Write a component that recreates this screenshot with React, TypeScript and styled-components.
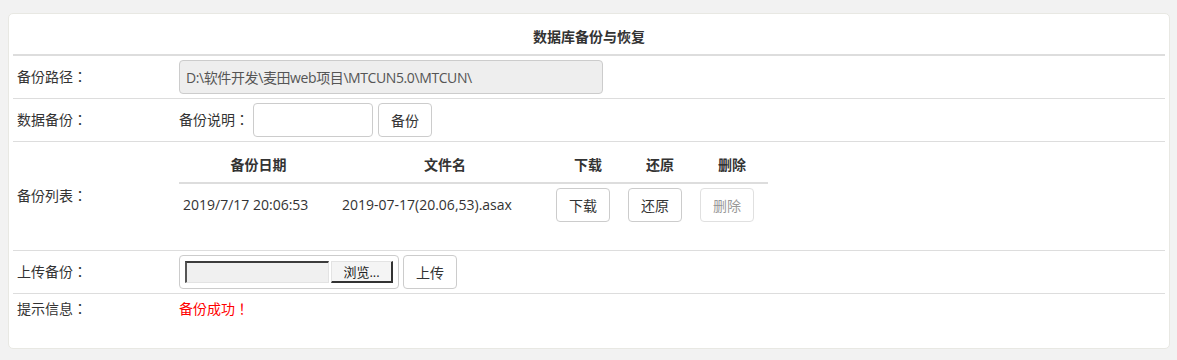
import React from 'react'
import styled, { createGlobalStyle } from 'styled-components'

const GlobalStyle = createGlobalStyle`
  body {
    margin: 0;
    background: #f2f2f2;
    font-family: 'Open Sans', 'Noto Sans CJK SC', sans-serif;
    font-size: 14px;
    color: #333;
  }
`

// TC variant centres full-width punctuation (：！) like the original font does
const labelFont = `'Open Sans', 'Noto Sans CJK TC', sans-serif`

const Card = styled.div`
  margin: 13px 7px 11px 8px;
  padding: 0 4px 24px 4px;
  background: #fff;
  border: 1px solid #e8e8e3;
  border-radius: 5px;
`

const FormTable = styled.table`
  width: 100%;
  border-collapse: collapse;
  font-size: 14px;
`

const Row = styled.tr<{ $last?: boolean }>`
  border-bottom: ${(p) => (p.$last ? 'none' : '1px solid #ddd')};
`

const TitleRow = styled.tr`
  border-bottom: 2px solid #ddd;
`

const TitleCell = styled.th`
  height: 40px;
  padding: 13px 4px 7px;
  box-sizing: border-box;
  line-height: 20px;
  font-weight: 700;
  text-align: center;
  color: #333;
`

const LabelCell = styled.td`
  width: 154px;
  padding: 4px;
  line-height: 22px;
  vertical-align: middle;
  color: #333;
  font-family: ${labelFont};
`

const ValueCell = styled.td`
  padding: 4px;
  line-height: 22px;
  vertical-align: middle;
`

const Inline = styled.div`
  display: flex;
  align-items: center;
  gap: 4px;
`

const Caption = styled.span`
  font-family: ${labelFont};
`

const TextInput = styled.input<{ $width: number; $readonly?: boolean }>`
  box-sizing: border-box;
  width: ${(p) => p.$width}px;
  height: 34px;
  padding: 0 6px;
  border: 1px solid #ccc;
  border-radius: 4px;
  background: ${(p) => (p.$readonly ? '#eee' : '#fff')};
  color: #555;
  font-family: 'Open Sans', 'Noto Sans CJK SC', sans-serif;
  font-size: 14px;
  letter-spacing: ${(p) => (p.$readonly ? '-0.4px' : 'normal')};
  outline: none;
`

const Button = styled.button<{ $gap?: number }>`
  box-sizing: border-box;
  width: 54px;
  height: 34px;
  padding: 0;
  margin-left: ${(p) => p.$gap ?? 0}px;
  border: 1px solid #ccc;
  border-radius: 4px;
  background: #fff;
  color: #333;
  font-family: 'Open Sans', 'Noto Sans CJK SC', sans-serif;
  font-size: 14px;
  cursor: pointer;

  &:disabled {
    color: #999;
    border-color: #e0e0e0;
    cursor: not-allowed;
  }
`

const ListTable = styled.table`
  width: 589px;
  margin-bottom: 20px;
  table-layout: fixed;
  border-collapse: collapse;
  font-size: 14px;
`

// widths are content widths; 4px padding on each side
const ListHead = styled.th<{ $width: number }>`
  width: ${(p) => p.$width}px;
  padding: 9px 4px 7px;
  line-height: 20px;
  font-weight: 700;
  text-align: center;
  color: #333;
  border-bottom: 2px solid #ddd;
`

const ListCell = styled.td`
  padding: 4px;
  line-height: 22px;
  text-align: left;
  vertical-align: middle;
  white-space: nowrap;
  color: #333;
`

const FileBox = styled.div`
  box-sizing: border-box;
  display: flex;
  align-items: center;
  gap: 2px;
  width: 220px;
  height: 34px;
  padding: 0 5px;
  border: 1px solid #ccc;
  border-radius: 4px;
`

const FileField = styled.div`
  box-sizing: border-box;
  width: 144px;
  height: 22px;
  background: #f0f0f0;
  border-top: 2px solid #3c3c3c;
  border-left: 2px solid #555;
  border-right: 1px solid #e3e3e3;
  border-bottom: 1px solid #e3e3e3;
`

const BrowseButton = styled.button`
  box-sizing: border-box;
  width: 62px;
  height: 22px;
  padding: 0;
  background: #f4f4f4;
  border-top: 1px solid #e3e3e3;
  border-left: 1px solid #e3e3e3;
  border-right: 2px solid #333;
  border-bottom: 2px solid #333;
  color: #222;
  font-family: 'Open Sans', 'Noto Sans CJK SC', sans-serif;
  font-size: 13px;
  line-height: 18px;
`

const Hint = styled.span`
  color: #f00;
  font-family: ${labelFont};
`

const backups = [
  { date: '2019/7/17 20:06:53', file: '2019-07-17(20.06,53).asax' },
]

export default function App() {
  return (
    <>
      <GlobalStyle />
      <Card>
        <FormTable>
          <tbody>
            <TitleRow>
              <TitleCell colSpan={2}>数据库备份与恢复</TitleCell>
            </TitleRow>
            <Row>
              <LabelCell>备份路径：</LabelCell>
              <ValueCell>
                <TextInput
                  $width={424}
                  $readonly
                  readOnly
                  value="D:\软件开发\麦田web项目\MTCUN5.0\MTCUN\"
                />
              </ValueCell>
            </Row>
            <Row>
              <LabelCell>数据备份：</LabelCell>
              <ValueCell>
                <Inline>
                  <Caption>备份说明：</Caption>
                  <TextInput $width={120} defaultValue="" />
                  <Button $gap={1}>备份</Button>
                </Inline>
              </ValueCell>
            </Row>
            <Row>
              <LabelCell>备份列表：</LabelCell>
              <ValueCell>
                <ListTable>
                  <thead>
                    <tr>
                      <ListHead $width={151}>备份日期</ListHead>
                      <ListHead $width={206}>文件名</ListHead>
                      <ListHead $width={64}>下载</ListHead>
                      <ListHead $width={64}>还原</ListHead>
                      <ListHead $width={64}>删除</ListHead>
                    </tr>
                  </thead>
                  <tbody>
                    {backups.map((b) => (
                      <tr key={b.file}>
                        <ListCell>{b.date}</ListCell>
                        <ListCell>{b.file}</ListCell>
                        <ListCell>
                          <Button>下载</Button>
                        </ListCell>
                        <ListCell>
                          <Button>还原</Button>
                        </ListCell>
                        <ListCell>
                          <Button disabled>删除</Button>
                        </ListCell>
                      </tr>
                    ))}
                  </tbody>
                </ListTable>
              </ValueCell>
            </Row>
            <Row>
              <LabelCell>上传备份：</LabelCell>
              <ValueCell>
                <Inline>
                  <FileBox>
                    <FileField />
                    <BrowseButton>浏览...</BrowseButton>
                  </FileBox>
                  <Button>上传</Button>
                </Inline>
              </ValueCell>
            </Row>
            <Row $last>
              <LabelCell>提示信息：</LabelCell>
              <ValueCell>
                <Hint>备份成功！</Hint>
              </ValueCell>
            </Row>
          </tbody>
        </FormTable>
      </Card>
    </>
  )
}
